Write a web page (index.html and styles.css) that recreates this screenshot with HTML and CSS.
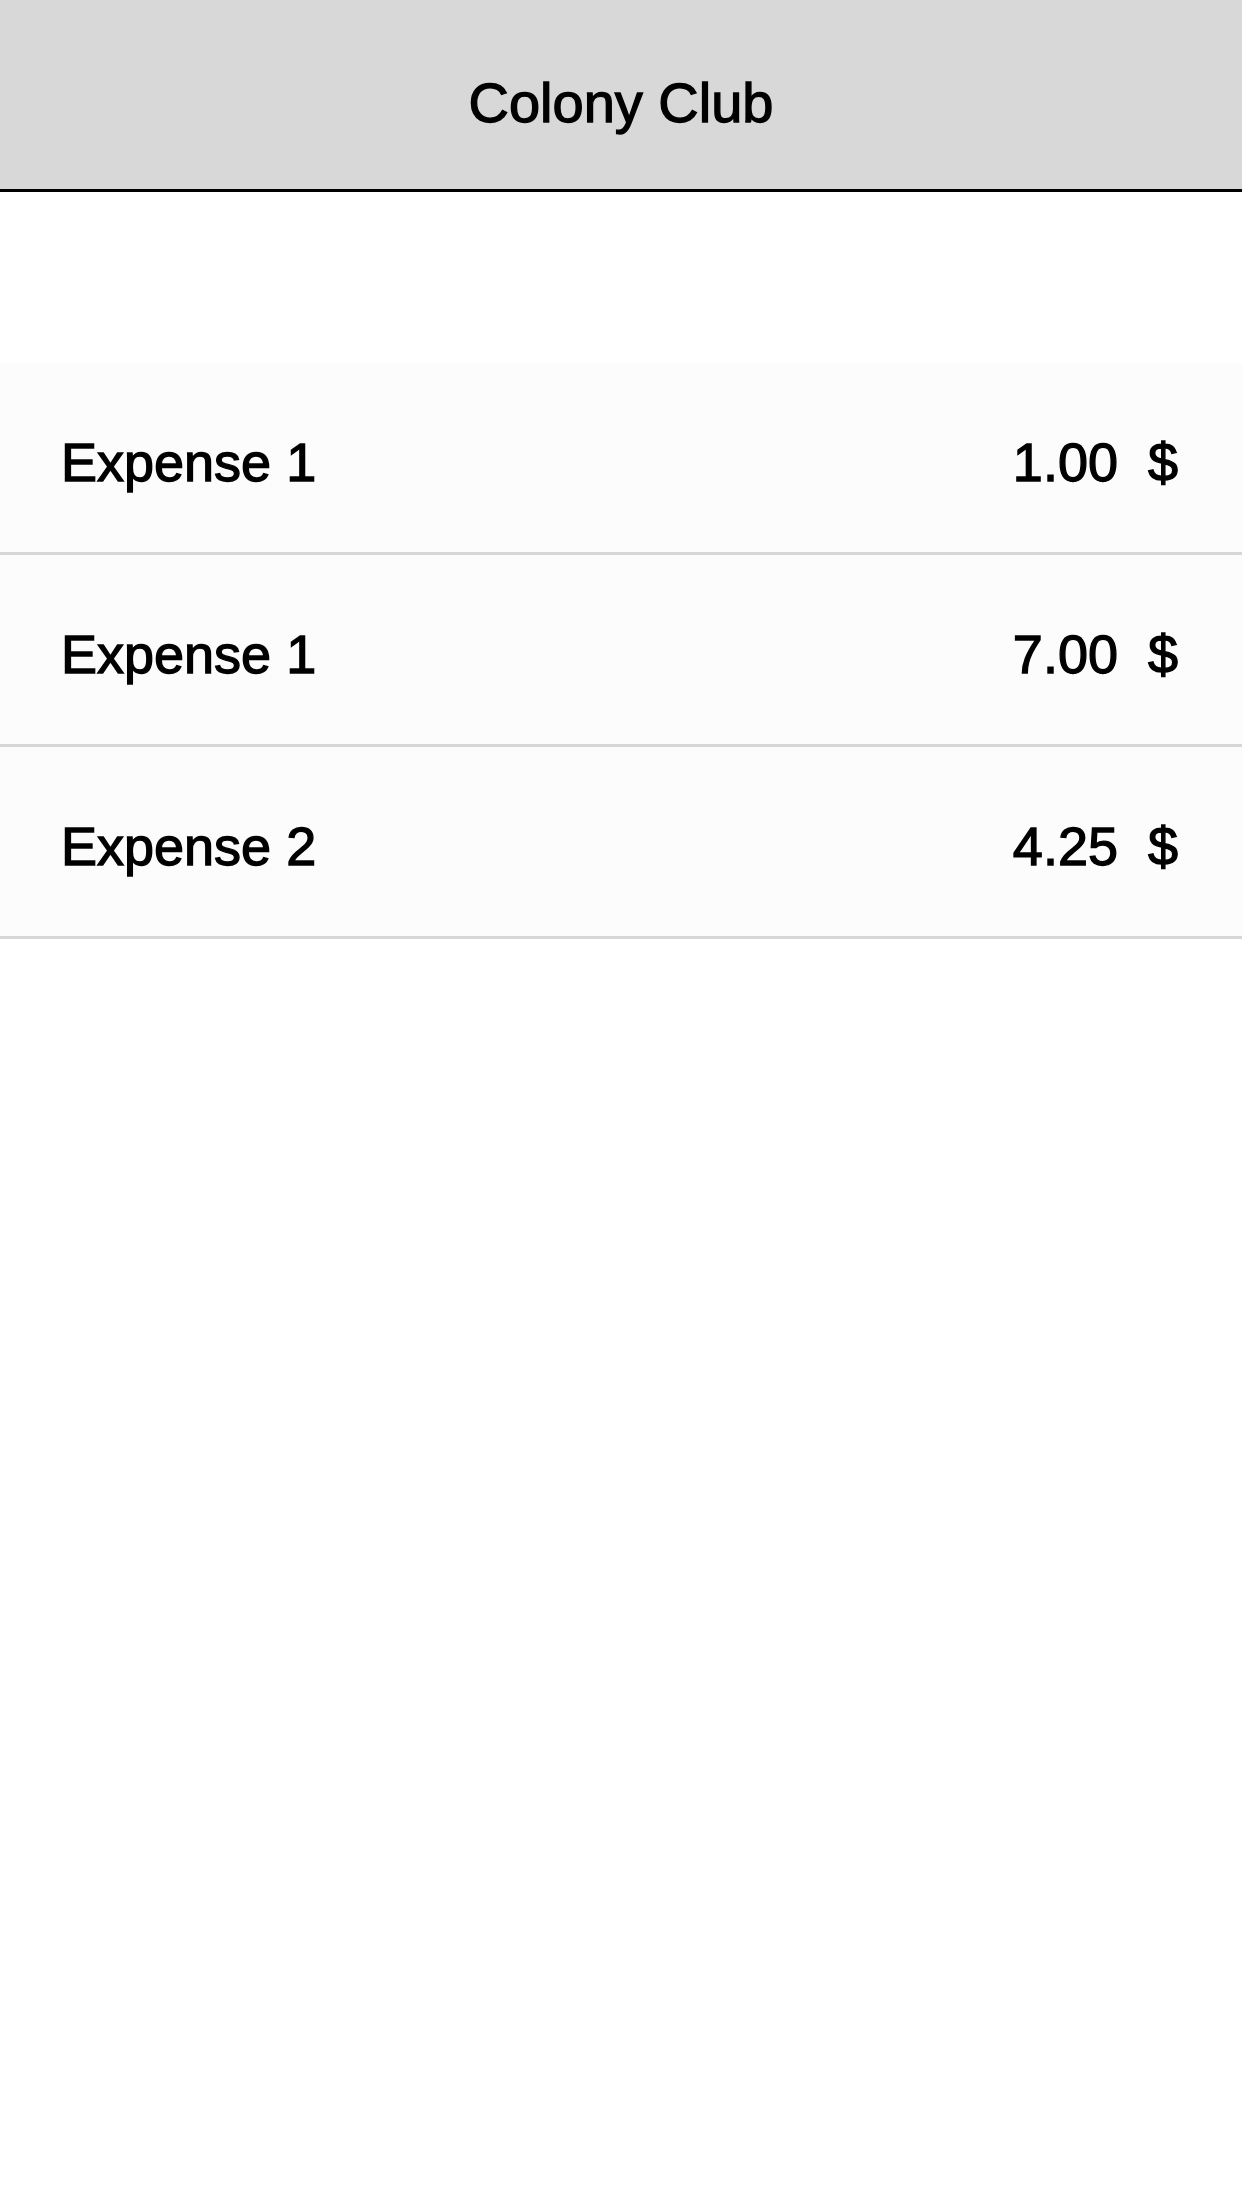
FILE: index.html
```html
<!DOCTYPE html>
<html lang="en">
<head>
<meta charset="utf-8">
<title>Colony Club</title>
<link rel="stylesheet" href="styles.css">
</head>
<body>
  <header class="navbar">
    <h1 class="navbar-title">Colony Club</h1>
  </header>
  <main class="content">
    <ul class="expense-list">
      <li class="expense-row">
        <span class="expense-name">Expense 1</span>
        <span class="expense-amount"><span class="amount-value">1.00</span><span class="amount-currency">$</span></span>
      </li>
      <li class="expense-row">
        <span class="expense-name">Expense 1</span>
        <span class="expense-amount"><span class="amount-value">7.00</span><span class="amount-currency">$</span></span>
      </li>
      <li class="expense-row">
        <span class="expense-name">Expense 2</span>
        <span class="expense-amount"><span class="amount-value">4.25</span><span class="amount-currency">$</span></span>
      </li>
    </ul>
  </main>
</body>
</html>
```

FILE: styles.css
```css
* {
  box-sizing: border-box;
}

html, body {
  margin: 0;
  padding: 0;
  background: #ffffff;
}

body {
  width: 1242px;
  min-height: 2208px;
  font-family: "Liberation Sans", Arial, Helvetica, sans-serif;
  color: #000000;
}

.navbar {
  height: 192px;
  background: #d8d8d8;
  border-bottom: 3px solid #000000;
  display: flex;
  align-items: center;
  justify-content: center;
  padding-top: 16px;
}

.navbar-title {
  margin: 0;
  font-size: 56px;
  line-height: 1;
  font-weight: normal;
  -webkit-text-stroke: 1.3px #000000;
}

.content {
  padding-top: 171px;
}

.expense-list {
  list-style: none;
  margin: 0;
  padding: 0;
}

.expense-row {
  height: 192px;
  background: #fcfcfc;
  border-bottom: 3px solid #d6d6d6;
  display: flex;
  align-items: center;
  justify-content: space-between;
  padding: 9px 64px 0 61px;
  font-size: 54px;
  line-height: 1;
  -webkit-text-stroke: 1.3px #000000;
}

.expense-amount {
  display: flex;
  gap: 30px;
}
```
